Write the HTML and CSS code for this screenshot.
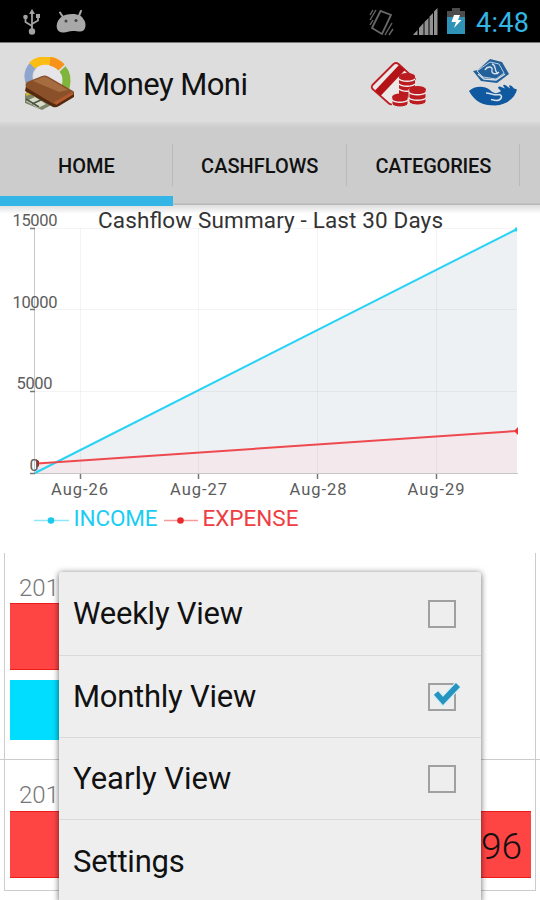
FILE: index.html
```html
<!DOCTYPE html>
<html lang="en">
<head>
    <meta charset="UTF-8">
    <meta name="viewport" content="width=device-width, initial-scale=1.0">
    <title>Money Moni</title>
    <link rel="stylesheet" href="styles.css">
</head>
<body>
    <div class="screen">

    <div class="status-bar">
        <svg class="usb" width="20" height="28" viewBox="0 0 20 28" fill="none" stroke="#a3a3a3" stroke-width="1.8">
            <path d="M10 4v18M10 18L3.500 14V9M10 16l6-3.500V8"/>
            <path d="M10 1l3 5H7z" fill="#a3a3a3" stroke="none"/>
            <circle cx="10" cy="23.500" r="3.200" fill="#a3a3a3" stroke="none"/>
            <circle cx="3.500" cy="9" r="2.300" fill="#a3a3a3" stroke="none"/>
            <path d="M14 6h4v4h-4z" fill="#a3a3a3" stroke="none"/>
        </svg>
        <svg class="droid" width="30" height="24" viewBox="0 0 30 24">
            <path d="M4 2.500l4 6M25 1l-2.500 6" stroke="#a8a8a8" stroke-width="2" stroke-linecap="round"/>
            <path d="M6 6.500C9 3.500 20 3 24 5.500c3 2 5.500 6 5.500 9 0 4-1.500 7-5 7-3 0-4-.5-8-.5s-6 2-10 1.500C2 22 .5 19 .7 15.500.8 12 3 8.500 6 6.500z" fill="#a8a8a8"/>
            <circle cx="10" cy="11" r="1.500" fill="#444"/>
            <circle cx="20" cy="10.500" r="1.500" fill="#444"/>
        </svg>
        <span class="spacer"></span>
        <svg class="vibrate" width="26" height="30" viewBox="0 0 26 30" fill="none">
            <path d="M3 20L11.500 3 22 7l-9 19z" stroke="#686868" stroke-width="1.800"/>
            <path d="M1 7l3-5M1 12l6-10M1 17l3-5M16 27l7-12M20 27l4-6" stroke="#666" stroke-width="1.400"/>
        </svg>
        <svg class="signal" width="25" height="28" viewBox="0 0 25 28" fill="#929292">
            <path d="M0 27l4.500-5v5zM6 20l4.500-5v12H6zM11.500 14l4-4v17h-4zM16.500 8.500L20 5v22h-3.500zM21 3.500L24.500 0v27H21z"/>
        </svg>
        <svg class="battery" width="18" height="27" viewBox="0 0 18 27">
            <path d="M5 0h8v3h5v7H0V3h5z" fill="#4c4c4c"/>
            <path d="M0 9h18v17H0z" fill="#2f93b7"/>
            <path d="M7 7h6l-2 5h3.500L7 20l2-6H4.500z" fill="#fff"/>
        </svg>
        <span class="clock">4:48</span>
    </div>

    <div class="action-bar">
        <svg class="logo" width="52" height="54" viewBox="0 0 52 54" fill="none">
            <ellipse cx="24" cy="20" rx="14" ry="14" fill="#e6e6ea"/>
            <path d="M6.500 28C3 20 4 13 10 7.500" stroke="#8ea5cd" stroke-width="8"/>
            <path d="M8 8.500C15 2 29 1 37 10" stroke="#fbbd13" stroke-width="8.500"/>
            <path d="M26 4.500c5 .5 8 2.500 11.500 6" stroke="#f7921c" stroke-width="8.500"/>
            <path d="M38.500 12c4.500 5 5 11 3 19" stroke="#80b53c" stroke-width="8"/>
            <path d="M1 37l4-4 26 13-13 7L1 46z" fill="#7d866b"/>
            <path d="M2 44l9-4 11 7-8 4z" fill="#d9dcc8"/>
            <path d="M2 38c4-3 8-2 10 2" stroke="#d3b52d" stroke-width="2.500"/>
            <path d="M2 42l13 8M8 47l11-5" stroke="#4a5643" stroke-width="1.500"/>
            <path d="M2 29l-1 5 28 16q3 1 6-1l15-9v-5L33 44z" fill="#55290f"/>
            <path d="M3 25l15-6q3-1 6 .500L49 34q2 1 0 3L34 46q-3 2-6 0L3 31q-3-3 0-6z" fill="#89502a"/>
            <path d="M9 24l10-4q2-.5 5 1l20 12-9 2z" fill="#a66b3f"/>
            <path d="M30 45l18-10 2 2-18 11z" fill="#b15a2e"/>
        </svg>
        <h1 class="title">Money Moni</h1>
        <span class="spacer"></span>
        <svg class="card-icon" width="58" height="48" viewBox="0 0 58 48">
            <path d="M3.500 24L24.500 3q2.500-2 5 0L46 18 24 42.500q-2 1.500-4 0L3.500 28q-1.500-2 0-4z" fill="#ebe8e8" stroke="#bd1e23" stroke-width="1.800"/>
            <path d="M6 29.500L30 4l6 5-24.500 26z" fill="#b31217"/>
            <g fill="#bc1b20">
                <path d="M30 15v19c2 4 14 4 16 0V15z"/>
                <ellipse cx="38" cy="15" rx="8" ry="3"/>
                <path d="M30 18c3 3 13 3 16 0M30 23c3 3 13 3 16 0M30 28c3 3 13 3 16 0" fill="none" stroke="#eee" stroke-width="1.600"/>
                <path d="M40 28v13c2 4 15 4 17 0V28z" stroke="#e4e0e0" stroke-width="1"/>
                <ellipse cx="48.500" cy="28.500" rx="8.500" ry="3.500"/>
                <path d="M40 31.500c3 3 14 3 17 0M40 37c3 3 14 3 17 0" fill="none" stroke="#eee" stroke-width="1.600"/>
                <path d="M23 36v7c2 4 14 4 16 0v-7z" stroke="#e4e0e0" stroke-width="1"/>
                <ellipse cx="31" cy="36" rx="8" ry="3.500"/>
                <path d="M23 39c3 3 13 3 16 0" fill="none" stroke="#eee" stroke-width="1.600"/>
            </g>
        </svg>
        <svg class="hand-icon" width="50" height="49" viewBox="0 0 50 49">
            <path d="M22 0l12 3 7 12-12 9-16-2-8-10 5-1z" fill="#23619b"/>
            <path d="M22 3l9 2 5 9-8 6-13-2-6-6z" fill="none" stroke="#bdcddc" stroke-width="1"/>
            <path d="M17 11c2-4 8-4 7 0s4 5 7 2M24 5c5 1 1 6 6 10M10 15l6 5 12 1 9-6" fill="none" stroke="#d5dfe8" stroke-width="1.400"/>
            <path d="M1 32c5-5 15-6 21-1 4 4 7 4 11 1l-3-3q0-2 2-1.500l5 2-2-3q1-1.500 3 0l4 3-1-3q2-1 5 3l3 1c-2 8-9 15-22 16-13 0-20-4-26-14.500z" fill="#0f59a0"/>
            <path d="M18 34c5 0 8 3 14 1.500 3 2 1 6-4 6l-5-1" fill="none" stroke="#d5dfe8" stroke-width="1.500"/>
        </svg>
    </div>

    <div class="tabs">
        <div class="tab active"><span>HOME</span></div>
        <div class="tab"><span>CASHFLOWS</span></div>
        <div class="tab"><span>CATEGORIES</span></div>
    </div>

    <svg class="chart" width="540" height="347" viewBox="0 206 540 347">
        <path d="M34.500 473L517 228.500V473z" fill="#edf1f4"/>
        <path d="M37 464L517 430.500V473H37z" fill="#f3e8ec"/>
        <g class="grid">
            <path d="M35 228.500h482M35 309.500h482M35 391.500h482"/>
            <path d="M80.500 228v245M198.500 228v245M317.500 228v245M436.500 228v245"/>
        </g>
        <path d="M34.500 228v245.500H518" stroke="#c6c6c6" fill="none"/>
        <path d="M30 228.500h5M30 309.500h5M30 391.500h5M30 473.500h5M80.500 474v5M198.500 474v5M317.500 474v5M436.500 474v5" stroke="#777" stroke-width="1.500"/>
        <path d="M35 473L517 229" stroke="#27d3f5" stroke-width="2"/>
        <path d="M37 463.500L517 431" stroke="#ee494f" stroke-width="2"/>
        <path d="M516 227.500v4" stroke="#27d3f5" stroke-width="2"/>
        <path d="M36 459l3 2v5l-3 2z" fill="#b8252a"/>
        <path d="M518 427l-3 3v2l3 3z" fill="#e33"/>
        <g class="axis">
            <text x="12.500" y="225.500" textLength="45">15000</text>
            <text x="12.500" y="307.500" textLength="45">10000</text>
            <text x="16.500" y="388.500" textLength="36">5000</text>
            <text x="29.500" y="470.500">0</text>
            <text x="51" y="495" textLength="57">Aug-26</text>
            <text x="170" y="495" textLength="57">Aug-27</text>
            <text x="289.500" y="495" textLength="57">Aug-28</text>
            <text x="407.500" y="495" textLength="57">Aug-29</text>
        </g>
        <text class="chart-title" x="98" y="227.500" textLength="345">Cashflow Summary - Last 30 Days</text>
        <path d="M34 520.500h35" stroke="#8fe8fa" stroke-width="1.500"/>
        <circle cx="51" cy="520.500" r="3.300" fill="#1cc9ee"/>
        <text class="legend" x="73.500" y="526" textLength="84" fill="#1bcdf2">INCOME</text>
        <path d="M164 520.500h34" stroke="#f79a9d" stroke-width="1.500"/>
        <circle cx="180.500" cy="520.500" r="3.300" fill="#e92a2d"/>
        <text class="legend" x="202.500" y="526" textLength="96" fill="#ef3d42">EXPENSE</text>
    </svg>

    <div class="summary">
        <div class="day">
            <div class="date">2013</div>
            <div class="bar expense short"></div>
            <div class="bar income short"></div>
        </div>
        <hr class="line">
        <div class="day last">
            <div class="date">2013</div>
            <div class="bar expense">96</div>
        </div>
    </div>

    <div class="menu">
        <div class="item"><span class="label weekly">Weekly View</span><span class="check"></span></div>
        <div class="item"><span class="label monthly">Monthly View</span>
            <span class="check">
                <svg class="tick" width="30" height="26" viewBox="0 0 30 26"><path d="M4 12l7 8L26 4" fill="none" stroke="#d2ecf5" stroke-width="8"/><path d="M4 12l7 8L26 4" fill="none" stroke="#2594c1" stroke-width="5.500"/></svg>
            </span>
        </div>
        <div class="item"><span class="label yearly">Yearly View</span><span class="check"></span></div>
        <div class="item"><span class="label settings">Settings</span></div>
    </div>

    </div>
</body>
</html>
```
FILE: styles.css
```css
* {
    box-sizing: border-box;
}
body {
    margin: 0;
    background: #fff;
    font-family: Roboto, "Liberation Sans", sans-serif;
    color: #111;
}
.screen {
    position: relative;
    width: 540px;
    height: 900px;
    overflow: hidden;
}
.spacer {
    flex: 1;
}

.status-bar {
    display: flex;
    align-items: flex-start;
    height: 43px;
    padding: 8px 11px 0 22px;
    background: #000;
    border-bottom: 1px solid #777;
}
.droid {
    margin: 2px 0 0 14px;
}
.signal {
    margin-left: 18px;
}
.battery {
    margin-left: 9px;
}
.clock {
    width: 53px;
    margin: -1px 0 0 11px;
    font-size: 27px;
    line-height: 33px;
    letter-spacing: .3px;
    color: #33b5e5;
    white-space: nowrap;
}

.action-bar {
    display: flex;
    align-items: flex-start;
    height: 79px;
    padding: 14px 22px 0 24px;
    background: #ddd;
}
.title {
    margin: 8px 0 0 7px;
    font-size: 31px;
    font-weight: 400;
    line-height: 39px;
    letter-spacing: -.55px;
}
.card-icon {
    margin: 4px 41px 0 0;
}
.hand-icon {
    margin-top: 2px;
}

.tabs {
    display: flex;
    height: 84px;
    background: linear-gradient(#d8d8d8, #ccc 6px, #ccc 81px, #b8b8b8 82px);
}
.tab {
    display: flex;
    align-items: center;
    justify-content: center;
    width: 173.500px;
    padding-top: 3px;
    font-size: 20px;
    font-weight: 500;
    background: linear-gradient(#b9b9b9, #b9b9b9) right 22px / 1px 42px no-repeat;
}
.tab:nth-child(3) {
    letter-spacing: -.2px;
}
.tab.active {
    width: 173px;
    border-bottom: 10px solid #33b5e5;
    padding-top: 13px;
}

.chart {
    display: block;
    margin-top: -1px;
    padding-top: 1px;
    height: 348px;
    background: linear-gradient(#ddd, #fff 9px);
}
.grid {
    stroke: #000;
    stroke-opacity: .045;
}
.axis {
    font-size: 16.500px;
    fill: #5c5c5c;
}
.chart-title {
    font-size: 22.500px;
    fill: #333;
}
.legend {
    font-size: 22.500px;
}

.summary {
    height: 347px;
}
.day {
    height: 206px;
    margin: 0 4px;
    padding: 20px 4px 0;
    border: solid #ccc;
    border-width: 0 1px;
}
.day.last {
    height: 131px;
    border-bottom-width: 1px;
}
.date {
    height: 30px;
    padding-left: 10px;
    font-size: 24px;
    font-weight: 300;
    line-height: 31px;
    color: #777;
}
.bar {
    margin: 0 0 10px 1px;
}
.bar.short {
    width: 300px;
}
.expense {
    height: 67px;
    padding-right: 9px;
    background: #ff4444;
    border: solid #ed1c1c;
    border-width: 1px 0;
    font-size: 37px;
    font-weight: 300;
    line-height: 69px;
    text-align: right;
}
.income {
    height: 60px;
    background: #00ddff;
}
.line {
    height: 1px;
    margin: 0;
    border: 0;
    background: #ccc;
}
.line + .day .date {
    height: 31px;
}

.menu {
    position: absolute;
    left: 59px;
    top: 572px;
    width: 422px;
    height: 330px;
    background: #eee;
    border-radius: 2px 2px 0 0;
    box-shadow: 0 1px 6px rgba(0, 0, 0, .6);
}
.item {
    display: flex;
    align-items: center;
    justify-content: space-between;
    height: 82px;
    padding: 0 25px 0 14px;
    font-size: 31px;
    border-bottom: 1px solid #d9d9d9;
}
.item:first-child {
    height: 84px;
}
.item:last-child {
    border: 0;
}
.weekly,
.monthly {
    letter-spacing: -.25px;
}
.settings {
    letter-spacing: -.2px;
}
.check {
    position: relative;
    width: 28px;
    height: 28px;
    border: 2px solid #a0a0a0;
}
.tick {
    position: absolute;
    left: 2px;
    top: -4px;
}
```
